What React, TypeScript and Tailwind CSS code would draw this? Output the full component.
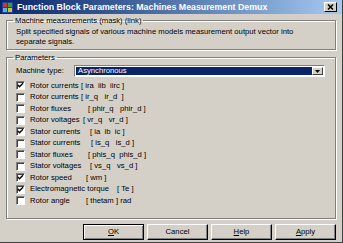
import React from "react"

const font = { fontFamily: '"Liberation Sans", Arial, sans-serif' }

const rows = [
  { label: "Rotor currents", sig: "[ ira  iib  iirc ]", on: true, w: "w-[51px]" },
  { label: "Rotor currents", sig: "[ ir_q   ir_d  ]", on: false, w: "w-[51px]" },
  { label: "Rotor fluxes", sig: "[ phir_q   phir_d ]", on: false, w: "w-[58px]" },
  { label: "Rotor voltages", sig: "[ vr_q   vr_d ]", on: false, w: "w-[53px]" },
  { label: "Stator currents", sig: "[ ia  ib  ic ]", on: true, w: "w-[60px]" },
  { label: "Stator currents", sig: "[ is_q   is_d ]", on: false, w: "w-[61px]" },
  { label: "Stator fluxes", sig: "[ phis_q  phis_d ]", on: false, w: "w-[58px]" },
  { label: "Stator voltages", sig: "[ vs_q   vs_d ]", on: false, w: "w-[60px]" },
  { label: "Rotor speed", sig: "[ wm ]", on: true, w: "w-[56px]" },
  { label: "Electromagnetic torque", sig: "[ Te ]", on: true, w: "w-[87px]" },
  { label: "Rotor angle", sig: "[ thetam ] rad", on: false, w: "w-[56px]" },
]

function Check({ on }: { on: boolean }) {
  return (
    <div className="w-[9px] h-[9px] bg-white border-t border-l border-[#808080] border-r border-b border-r-white border-b-white shadow-[inset_1px_1px_0_#404040] flex items-center justify-center">
      {on && (
        <svg width="7" height="7" viewBox="0 0 7 7">
          <path d="M1 3 L2.5 4.7 L6 1.2" stroke="black" strokeWidth="1.4" fill="none" />
        </svg>
      )}
    </div>
  )
}

function Btn({ children, def }: { children: React.ReactNode; def?: boolean }) {
  return (
    <div
      className={`w-[61px] h-[16px] flex items-center justify-center text-[7.7px] text-black bg-[#d4d0c8] ${
        def
          ? "border border-black shadow-[inset_1px_1px_0_white,inset_-1px_-1px_0_#808080]"
          : "border-t border-l border-white border-r border-b border-r-black border-b-black shadow-[inset_-1px_-1px_0_#808080]"
      }`}
    >
      {children}
    </div>
  )
}

export default function App() {
  return (
    <div style={font} className="w-[343px] h-[243px] bg-[#d4d0c8] flex flex-col border-r border-b border-r-[#404040] border-b-[#404040] overflow-hidden text-black">
      {/* Title bar */}
      <div className="h-[14px] flex items-center bg-gradient-to-r from-[#0a246a] to-[#a6caf0] pl-[2px] pr-[5px]">
        <svg width="11" height="11" viewBox="0 0 11 11">
          <rect x="0" y="0" width="11" height="11" fill="#2040a0" />
          <rect x="1" y="1" width="4" height="4" fill="#e03020" />
          <rect x="6" y="1" width="4" height="4" fill="#30a040" />
          <rect x="1" y="6" width="4" height="4" fill="#40c0e0" />
          <rect x="6" y="6" width="4" height="4" fill="#e0c020" />
        </svg>
        <span className="ml-[4px] text-[8.8px] font-bold text-white leading-none whitespace-nowrap">
          Function Block Parameters: Machines Measurement Demux
        </span>
        <div className="ml-auto w-[13px] h-[10px] bg-[#d4d0c8] border-t border-l border-white border-r border-b border-r-black border-b-black flex items-center justify-center">
          <svg width="7" height="6" viewBox="0 0 7 6">
            <path d="M1 0.5 L6 5.5 M6 0.5 L1 5.5" stroke="black" strokeWidth="1.5" />
          </svg>
        </div>
      </div>

      {/* Description group */}
      <fieldset className="mt-[2px] mx-[6px] h-[34px] border border-[#808080] shadow-[inset_1px_1px_0_white,1px_1px_0_white] px-[9px]">
        <legend className="text-[7.7px] leading-[9px] px-[2px] ml-[-3px]">Machine measurements (mask) (link)</legend>
        <div className="text-[7.7px] leading-[9.5px] pt-[2px]">
          <div className="whitespace-nowrap">Split specified signals of various machine models measurement output vector into</div>
          <div>separate signals.</div>
        </div>
      </fieldset>

      {/* Parameters group */}
      <fieldset className="mt-[3px] mx-[6px] h-[166px] border border-[#808080] shadow-[inset_1px_1px_0_white,1px_1px_0_white] pl-[9px] pr-[10px]">
        <legend className="text-[7.7px] leading-[9px] px-[2px] ml-[-3px]">Parameters</legend>
        <div className="flex items-center h-[12px] mt-[3px] text-[7.7px]">
          <span className="w-[58px] whitespace-nowrap">Machine type:</span>
          <div className="flex-1 h-[12px] bg-white border-t border-l border-[#808080] border-r border-b border-r-white border-b-white flex items-center p-[1px]">
            <div className="flex-1 h-full bg-[#0a246a] text-white flex items-center pl-[2px] leading-none">Asynchronous</div>
            <div className="w-[11px] h-full bg-[#d4d0c8] border-t border-l border-white border-r border-b border-r-[#404040] border-b-[#404040] flex items-center justify-center">
              <svg width="5" height="3" viewBox="0 0 5 3">
                <path d="M0 0 H5 L2.5 3 Z" fill="black" />
              </svg>
            </div>
          </div>
        </div>
        <div className="mt-[3px] flex flex-col">
          {rows.map((r, i) => (
            <div key={i} className="h-[11.5px] flex items-center text-[7.7px] whitespace-pre">
              <Check on={r.on} />
              <span className={`ml-[5px] ${r.w}`}>{r.label}</span>
              <span>{r.sig}</span>
            </div>
          ))}
        </div>
      </fieldset>

      {/* Buttons */}
      <div className="mt-[5px] flex justify-end gap-[3px] pr-[6px]">
        <Btn def>
          <span><span className="underline">O</span>K</span>
        </Btn>
        <Btn>Cancel</Btn>
        <Btn>
          <span><span className="underline">H</span>elp</span>
        </Btn>
        <Btn>
          <span><span className="underline">A</span>pply</span>
        </Btn>
      </div>
    </div>
  )
}
